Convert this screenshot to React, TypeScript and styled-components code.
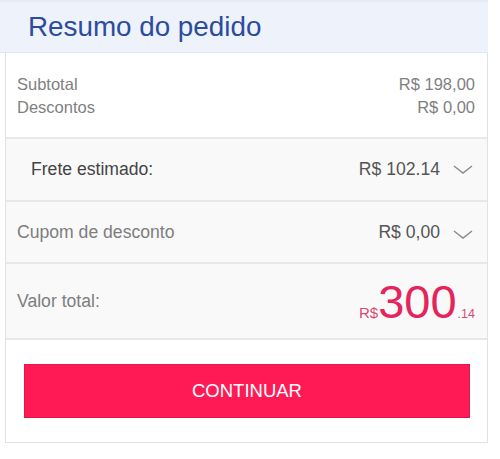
import React from "react";
import styled, { createGlobalStyle } from "styled-components";

const Global = createGlobalStyle`
  html, body { margin: 0; padding: 0; background: #fff; }
  body { font-family: "Liberation Sans", Arial, sans-serif; }
`;

const Panel = styled.div`
  width: 488px;
  display: flex;
  flex-direction: column;
`;

const Header = styled.div`
  height: 53px;
  box-sizing: border-box;
  background: #eef2fa;
  border-top: 2px solid #e6eaf3;
  border-bottom: 1px solid #e3e7ef;
  display: flex;
  align-items: center;
  padding: 0 0 0 28px;
`;

const Title = styled.h1`
  margin: 0;
  font-weight: normal;
  font-size: 27.8px;
  color: #2c4c9f;
  line-height: 1;
`;

const Body = styled.div`
  margin-left: 5px;
  border: 1px solid #e2e2e2;
  border-top: none;
  display: flex;
  flex-direction: column;
`;

const Section = styled.div<{ $bg?: string; $h: number; $divider?: boolean }>`
  height: ${(p) => p.$h}px;
  box-sizing: border-box;
  background: ${(p) => p.$bg || "#fff"};
  border-bottom: ${(p) => (p.$divider ? "2px solid #e8e8e8" : "none")};
`;

const Summary = styled.div`
  display: grid;
  grid-template-columns: 1fr auto;
  padding: 20px 12px 0 11px;
  font-size: 16.5px;
  line-height: 23px;
  color: #7f7f7f;
`;

const Right = styled.span`
  text-align: right;
`;

const Row = styled.div<{ $indent?: number }>`
  height: 100%;
  display: flex;
  align-items: center;
  padding: 0 14px 0 ${(p) => p.$indent ?? 11}px;
`;

const Label = styled.span<{ $dark?: boolean }>`
  flex: 1;
  font-size: 17.6px;
  color: ${(p) => (p.$dark ? "#444" : "#7d7d7d")};
`;

const Value = styled.span`
  font-size: 17.6px;
  color: #555;
  margin-right: 13px;
`;

const Chevron = styled.svg<{ $dy?: number }>`
  width: 20px;
  height: 9px;
  margin-top: ${(p) => p.$dy ?? 0}px;
  flex: none;
`;

const Price = styled.div`
  display: flex;
  align-items: baseline;
  color: #e5245b;
  margin-right: -2px;
`;

const Currency = styled.span`
  font-size: 15px;
  color: #d94a74;
`;

const Big = styled.span`
  font-size: 47px;
  line-height: 1;
`;

const Cents = styled.span`
  font-size: 12.5px;
  color: #d94a74;
  margin-left: 1px;
`;

const ButtonArea = styled.div`
  padding: 24px 17px 24px 18px;
  background: #fff;
`;

const Button = styled.button`
  width: 100%;
  height: 54px;
  border: 1px solid #e3164d;
  background: #ff1a55;
  color: #fff;
  font-family: "Liberation Sans", Arial, sans-serif;
  font-size: 18.5px;
  cursor: pointer;
  padding: 0;
`;

const ChevronIcon = ({ dy }: { dy?: number }) => (
  <Chevron $dy={dy} viewBox="0 0 20 9">
    <polyline points="1,1 10,8 19,1" fill="none" stroke="#8a8a8a" strokeWidth="1.4" />
  </Chevron>
);

export default function App() {
  return (
    <>
      <Global />
      <Panel>
        <Header>
          <Title>Resumo do pedido</Title>
        </Header>
        <Body>
          <Section $h={86} $divider>
            <Summary>
              <span>Subtotal</span>
              <Right>R$ 198,00</Right>
              <span>Descontos</span>
              <Right>R$ 0,00</Right>
            </Summary>
          </Section>
          <Section $h={63} $bg="#f9f9f9" $divider>
            <Row $indent={25}>
              <Label $dark>Frete estimado:</Label>
              <Value>R$ 102.14</Value>
              <ChevronIcon />
            </Row>
          </Section>
          <Section $h={62} $bg="#f9f9f9" $divider>
            <Row>
              <Label>Cupom de desconto</Label>
              <Value>R$ 0,00</Value>
              <ChevronIcon dy={5} />
            </Row>
          </Section>
          <Section $h={76} $bg="#f9f9f9" $divider>
            <Row>
              <Label>Valor total:</Label>
              <Price>
                <Currency>R$</Currency>
                <Big>300</Big>
                <Cents>.14</Cents>
              </Price>
            </Row>
          </Section>
          <ButtonArea>
            <Button>CONTINUAR</Button>
          </ButtonArea>
        </Body>
      </Panel>
    </>
  );
}
